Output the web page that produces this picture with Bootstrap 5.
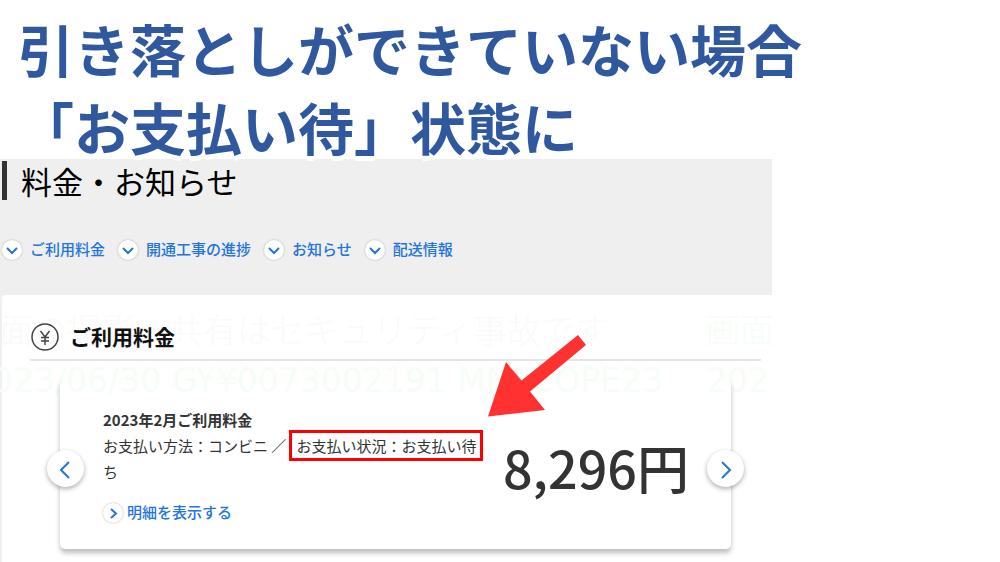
<!DOCTYPE html>
<html lang="ja">
<head>
<meta charset="utf-8">
<meta name="viewport" content="width=device-width, initial-scale=1">
<title>料金・お知らせ</title>
<link href="https://cdn.jsdelivr.net/npm/bootstrap@5.3.0/dist/css/bootstrap.min.css" rel="stylesheet">
<style>
body { font-family: "Noto Sans CJK JP", sans-serif; color: #333; background: #fff; font-size: 15px; overflow-x: hidden; }
a { color: #2374dc; text-decoration: none; }
.headline { font-size: 56px; line-height: 78px; font-weight: 700; color: #2f589e; padding: 9px 0 0 18px; height: 159px; white-space: nowrap; text-shadow: 0 5px 0 #fff; position: relative; z-index: 1; }
.portal { width: 77.2%; min-height: calc(100vh - 159px); background: #efefef; padding: 2px 0 0 2px; overflow: hidden; }
.page-title { font-size: 31px; line-height: 39px; height: 39px; font-weight: 400; color: #000; border-left: 5px solid #333; padding-left: 14px; }
.jump { height: 20px; margin-top: 40px; line-height: 18px; font-weight: 500; }
.jump a { margin-right: 13px; }
.ring { width: 20px; height: 20px; border-radius: 50%; background: #fff; box-shadow: 0 0 2px #aaa; flex: none; }
.sheet { background: #fff; border-radius: 4px 0 0 0; margin-top: 35px; min-height: 267px; padding: 24px 11px 0 28px; }
.sheet h2 { font-size: 21px; line-height: 34px; font-weight: 700; color: #111; }
.sec-head { border-bottom: 2px solid #e5e5e5; height: 42px; }
.ghost { left: -37px; top: 8px; right: 0; line-height: 52px; font-size: 34px; font-weight: 300; color: #fafafa; white-space: nowrap; pointer-events: none; }
.ghost .run { width: 741px; flex: none; }
.ghost .codes { font-family: "DejaVu Sans", sans-serif; font-size: 33px; font-weight: 400; color: #f6fdf6; }
.ghost .codes .run { padding-left: 6px; }
.ghost .green { color: #f6fdf6; }
.bill { margin: 19px 30px 0 30px; height: 169px; border-radius: 5px; padding: 27px 42px 0 43px; box-shadow: 0 4px 5px rgba(0,0,0,.26); }
.detail { width: 382px; line-height: 26px; flex: none; }
.detail h3 { font-size: 15px; line-height: 26px; font-weight: 700; }
.marked { outline: 3px solid #f00; outline-offset: 2px; margin-left: 8px; padding: 0 2px; }
.price { font-size: 52px; line-height: 60px; font-weight: 500; margin-top: 30px; white-space: nowrap; }
.detail .more { margin-top: 18px; line-height: 18px; font-weight: 500; }
.turn { width: 37px; height: 37px; border: 0; border-radius: 50%; background: #fff; box-shadow: 0 2px 5px rgba(0,0,0,.32); top: 70px; }
.turn-prev { left: -13px; }
.turn-next { right: -13px; }
.pointer { left: 428px; top: -46px; }
</style>
</head>
<body>
<h1 class="headline mb-0">引き落としができていない場合<br>「お支払い待」状態に</h1>
<main class="portal">
  <h2 class="page-title mb-0">料金・お知らせ</h2>
  <nav class="jump d-flex">
    <a href="#fee" class="d-flex gap-2"><span class="ring"><svg class="d-block" width="20" height="20" fill="none" stroke="#2374dc" stroke-width="2"><path d="M5 8l5 5 5-5"/></svg></span>ご利用料金</a>
    <a href="#work" class="d-flex gap-2"><span class="ring"><svg class="d-block" width="20" height="20" fill="none" stroke="#2374dc" stroke-width="2"><path d="M5 8l5 5 5-5"/></svg></span>開通工事の進捗</a>
    <a href="#news" class="d-flex gap-2"><span class="ring"><svg class="d-block" width="20" height="20" fill="none" stroke="#2374dc" stroke-width="2"><path d="M5 8l5 5 5-5"/></svg></span>お知らせ</a>
    <a href="#ship" class="d-flex gap-2"><span class="ring"><svg class="d-block" width="20" height="20" fill="none" stroke="#2374dc" stroke-width="2"><path d="M5 8l5 5 5-5"/></svg></span>配送情報</a>
  </nav>
  <section class="sheet position-relative" id="fee">
    <div class="ghost position-absolute">
      <div class="d-flex"><span class="run">画面の撮影・共有はセキュリティ事故です</span><span class="green">画面</span></div>
      <div class="d-flex codes"><span class="run">2023/06/30 GY¥0073002191 MNSCOPE23</span><span>202</span></div>
    </div>
    <div class="position-relative">
      <div class="sec-head d-flex">
        <svg class="me-2 mt-1" width="32" height="30" viewBox="0 0 32 30" fill="none" stroke="#444" stroke-width="1.5"><circle cx="15" cy="14" r="13"/><path d="M10.500 8l4.500 6 4.500-6M15 14v8M11 14.500h8M11 18h8"/></svg>
        <h2 class="mb-0">ご利用料金</h2>
      </div>
      <article class="bill position-relative d-flex">
        <div class="detail">
          <h3 class="mb-0">2023年2月ご利用料金</h3>
          <div>お支払い方法：コンビニ ／<span class="marked">お支払い状況：お支払い待</span>ち</div>
          <a href="#detail" class="more d-flex gap-1"><span class="ring"><svg class="d-block" width="20" height="20" fill="none" stroke="#2374dc" stroke-width="2"><path d="M8 6l5 4.500-5 4.500"/></svg></span>明細を表示する</a>
        </div>
        <div class="price ms-auto">8,296円</div>
        <button class="turn turn-prev position-absolute p-0" type="button" aria-label="前へ"><svg width="20" height="20" fill="none" stroke="#2374dc" stroke-width="2"><path d="M13 2L5 10l8 8"/></svg></button>
        <button class="turn turn-next position-absolute p-0" type="button" aria-label="次へ"><svg width="20" height="20" fill="none" stroke="#2374dc" stroke-width="2"><path d="M6 2l8 8-8 8"/></svg></button>
        <svg class="pointer position-absolute" width="100" height="83" viewBox="488 334 100 83"><path fill="#ff3131" d="M578 335L586 345 530 391.500 545 410 488 416.500 506 362 521.500 380.500z"/></svg>
      </article>
    </div>
  </section>
</main>
<script src="https://cdn.jsdelivr.net/npm/bootstrap@5.3.0/dist/js/bootstrap.bundle.min.js"></script>
</body>
</html>
